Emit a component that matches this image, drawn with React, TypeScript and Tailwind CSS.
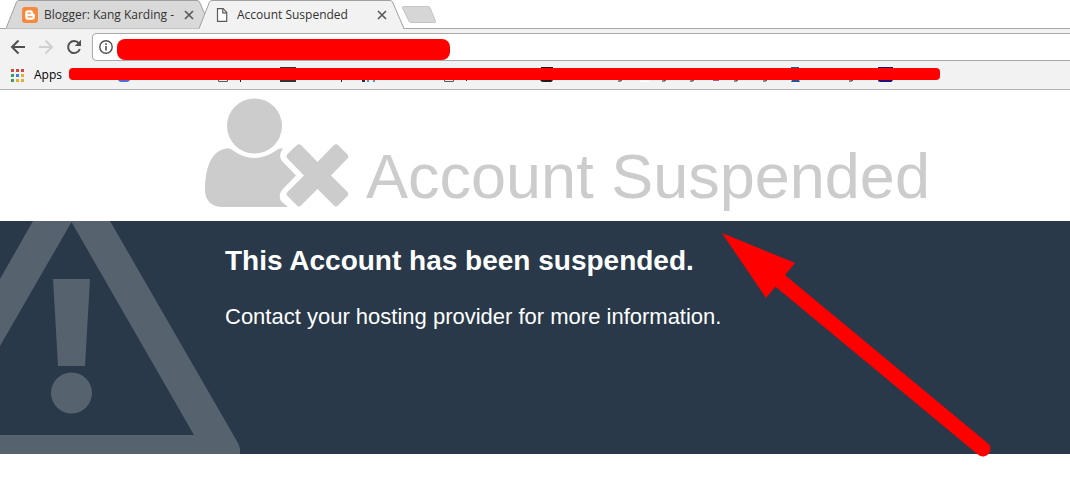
import type { ReactNode } from "react"

interface TabProps {
  title: string
  active?: boolean
  icon: ReactNode
}

function CloseIcon() {
  return (
    <svg viewBox="0 0 10 10" className="h-2.5 w-2.5" fill="none" stroke="#5a5a5a" strokeWidth="1.7">
      <path d="M1 1l8 8M9 1L1 9" />
    </svg>
  )
}

function PageIcon() {
  return (
    <svg viewBox="0 0 16 16" className="h-4 w-4" fill="#fff" stroke="#5a5a5a" strokeWidth="1.2">
      <path d="M2.5 1.6h5.600l3.600 3.800v9H2.500z" />
      <path d="M7.800 1.800v4h3.800" fill="none" />
    </svg>
  )
}

function BloggerIcon() {
  return (
    <svg viewBox="0 0 16 16" className="h-4 w-4">
      <rect width="16" height="16" rx="3" fill="#f58a3c" />
      <path
        d="M6 3.2h2.4c1.6 0 2.8 1.2 2.8 2.7 0 .7.3 1 .9 1 .5 0 .8.3.8.8V10c0 1.6-1.2 2.8-2.8 2.8H6c-1.6 0-2.8-1.2-2.8-2.8V6C3.2 4.4 4.4 3.2 6 3.2z"
        fill="#fff"
      />
      <path d="M6 6.100h2.300M6 9.900h4" stroke="#f58a3c" strokeWidth="1.4" strokeLinecap="round" />
    </svg>
  )
}

function Tab({ title, active, icon }: TabProps) {
  return (
    <div className={`relative -mr-3 h-[29px] w-[205px] shrink-0 ${active ? "z-10" : ""}`}>
      <svg viewBox="0 0 205 29" className="absolute inset-0 h-full w-full">
        <path
          d="M0 28.5L10.5 2Q11.2.5 13 .5H191Q192.800.5 193.500 2L205 28.500"
          fill={active ? "#f2f2f2" : "#d9d9d9"}
          stroke="#a0a0a0"
        />
        {active && <path d="M1 28.5H204" stroke="#f2f2f2" />}
      </svg>
      <div className="relative flex h-[29px] items-center pr-[17px] pl-4">
        {icon}
        <span className="ml-1.5 flex-1 whitespace-nowrap text-[12px] text-[#333]">{title}</span>
        <button type="button" aria-label={`Close ${title}`}>
          <CloseIcon />
        </button>
      </div>
    </div>
  )
}

function TabStrip() {
  return (
    <div className="relative flex h-[29px] bg-white pl-1.5">
      <div className="absolute inset-x-0 bottom-0 h-px bg-[#a8a8a8]" />
      <Tab title="Blogger: Kang Karding -" icon={<BloggerIcon />} />
      <Tab title="Account Suspended" active icon={<PageIcon />} />
      <button type="button" aria-label="New tab" className="relative ml-2 self-center pb-px pl-px">
        <svg viewBox="0 0 36 19" className="h-[19px] w-9">
          <path
            d="M3 1.5H27Q28.5 1.5 29.200 3L34.500 16Q35 17.500 33.500 17.500H10Q8.500 17.500 7.800 16L1.500 3Q1 1.500 3 1.500z"
            fill="#d6d6d6"
            stroke="#c4c4c4"
          />
        </svg>
      </button>
    </div>
  )
}

function Toolbar() {
  return (
    <div className="flex h-8 items-end overflow-hidden">
      <div className="flex h-7 items-center gap-3 px-2.5">
        <button type="button" aria-label="Back">
          <svg viewBox="0 0 16 16" className="h-4 w-4" fill="none" stroke="#505050" strokeWidth="2">
            <path d="M15 8H2.500M8.500 1.500L2 8l6.500 6.500" />
          </svg>
        </button>
        <button type="button" aria-label="Forward" disabled>
          <svg viewBox="0 0 16 16" className="h-4 w-4" fill="none" stroke="#d0d0d0" strokeWidth="2">
            <path d="M1 8h12.500M7.500 1.500L14 8l-6.500 6.500" />
          </svg>
        </button>
        <button type="button" aria-label="Reload">
          <svg viewBox="0 0 16 16" className="h-4 w-4">
            <path d="M12.800 4.300A6 6 0 1 0 13.800 10" fill="none" stroke="#505050" strokeWidth="2" />
            <path d="M15 .8V7H8.800z" fill="#505050" />
          </svg>
        </button>
      </div>
      <div className="relative -mr-1 flex h-7 flex-1 items-center rounded-sm border border-[#a8a8a8] bg-white pl-1.5">
        <svg viewBox="0 0 14 14" className="h-3.5 w-3.5" fill="none" stroke="#505050">
          <circle cx="7" cy="7" r="6.2" strokeWidth="1.400" />
          <path d="M7 6v4.500M7 3.300v1.600" strokeWidth="1.600" />
        </svg>
        <input aria-label="Address" type="text" className="h-full min-w-0 flex-1 px-2 text-[12px] outline-none" />
        <div className="absolute top-[5px] left-6 h-[21px] w-[333px] rounded-lg bg-[#f00]" />
      </div>
    </div>
  )
}

const appDots = ["#d04a3c", "#d04a3c", "#d04a3c", "#3a9b5c", "#4080e0", "#e0b030", "#3a9b5c", "#e0b030", "#e0b030"]

function BookmarksBar() {
  return (
    <div className="flex h-[29px] items-center gap-[7px] overflow-hidden border-b border-[#b4b4b4] pl-[11px]">
      <a href="#apps" className="flex items-center gap-2.5 text-[12px] text-black">
        <svg viewBox="0 0 13 13" className="h-[13px] w-[13px]">
          {appDots.map((color, i) => (
            <rect key={i} x={(i % 3) * 5} y={Math.floor(i / 3) * 5} width="3" height="3" fill={color} />
          ))}
        </svg>
        Apps
      </a>
      <svg viewBox="0 0 871 18" className="h-[18px] w-[871px] shrink-0">
        <path d="M49 14h12q-1 2-3 2h-6q-2 0-3-2z" fill="#4a6fd8" />
        <path d="M149.500 12v3.500h9V12M375.500 12v3.500h9V12" fill="none" stroke="#5a5a5a" />
        <path d="M211 1h16v15h-16z" fill="#333" />
        <path d="M171.500 13v3M272.500 13v3M397 15l2-2" stroke="#222" />
        <path d="M293 14h3v2h-3z" fill="#312850" />
        <path d="M298 14h2v2h-2zM304 14h2v2h-2z" fill="#3f9bd0" />
        <path d="M472 1h12v13q-1 2-2 2h-8q-2 0-3-2z" fill="#211820" />
        <path d="M549 15h3l1-2M593 15h3l1-2M621 15h3l1-2M665 15h3l1-2M694 15h3l1-2M780 15h3l1-2" fill="none" stroke="#222" />
        <path d="M571 14h9v2h-9z" fill="#fff" />
        <path d="M644 14h6v1h-6z" fill="#9460a8" />
        <path d="M722 1h8v13l1 2h-9l1-2z" fill="#20569a" />
        <path d="M809 1h15v13q-1 2-2 2h-11q-2 0-2-2z" fill="#18127a" />
        <rect y="2" width="871" height="12" rx="4" fill="#f00" />
      </svg>
    </div>
  )
}

function UserTimesIcon() {
  return (
    <svg viewBox="0 0 144 109" className="h-[109px] w-36 shrink-0" fill="#ccc">
      <circle cx="49.5" cy="28" r="27.500" />
      <path d="M22 50.500C24 50 26 51 28 52.500C34 57 42 60 49.500 60S65 57 71 52.500C74 50.500 76 50 78 51C75 54 74 59 77 63L91 77.500L77 92C74 96 74 101 77 104L83 109H18C7 109 0 103 0 92C0 73 5 52 22 50.500z" />
      <path d="M82.500 56L92 47Q94 45.500 96 47L112.500 64L129 47Q131 45.500 133 47L142.500 56.500Q144 58.500 142.500 60.500L126 77.500L142.500 94Q144 96 142.500 98L133 107.500Q131 109.500 129 107.500L112.500 91L96 107.500Q94 109.500 92 107.500L82.500 98Q80.500 96 82.500 94L99 77.500L82.500 60.500Q80.500 58.500 82.500 56z" />
    </svg>
  )
}

function WarningTriangle() {
  return (
    <svg viewBox="0 0 240 233" className="absolute top-0 left-0 h-full" fill="#56636f">
      <path
        fillRule="evenodd"
        d="M33 0H110L238 222Q240 226 240 229V233H0V214H194L71.500 1L0 125V58z"
      />
      <path d="M53 58H90L85 145H58z" />
      <circle cx="71.5" cy="172" r="20.500" />
    </svg>
  )
}

export default function App() {
  return (
    <div className="min-h-screen overflow-hidden bg-white font-['Liberation_Sans',Arial,sans-serif]">
      {/* Browser chrome */}
      <div className="bg-[#f2f2f2] font-['Open_Sans','Noto_Sans',sans-serif]">
        <TabStrip />
        <Toolbar />
        <BookmarksBar />
      </div>

      <header className="flex items-end gap-[17px] pt-2 pb-3.5 pl-[205px] text-[#ccc]">
        <UserTimesIcon />
        <h1 className="text-[63px] leading-[61px] whitespace-nowrap">Account Suspended</h1>
      </header>

      <main className="relative bg-[#293949] pt-5 pb-[121px] pl-[225px] text-white">
        <WarningTriangle />
        <div className="relative">
          <h2 className="text-[28px] leading-10 font-bold">This Account has been suspended.</h2>
          <p className="mt-5 text-[22px] leading-8">Contact your hosting provider for more information.</p>
        </div>

        {/* Pointer drawn over the page */}
        <svg viewBox="0 0 272 228" className="absolute top-3 left-[722px] h-[228px] w-[272px]" fill="#f00">
          <path d="M0 0L73 30L44 65z" />
          <path d="M56 46L261 216" stroke="#f00" strokeWidth="15" strokeLinecap="round" />
        </svg>
      </main>
    </div>
  )
}
